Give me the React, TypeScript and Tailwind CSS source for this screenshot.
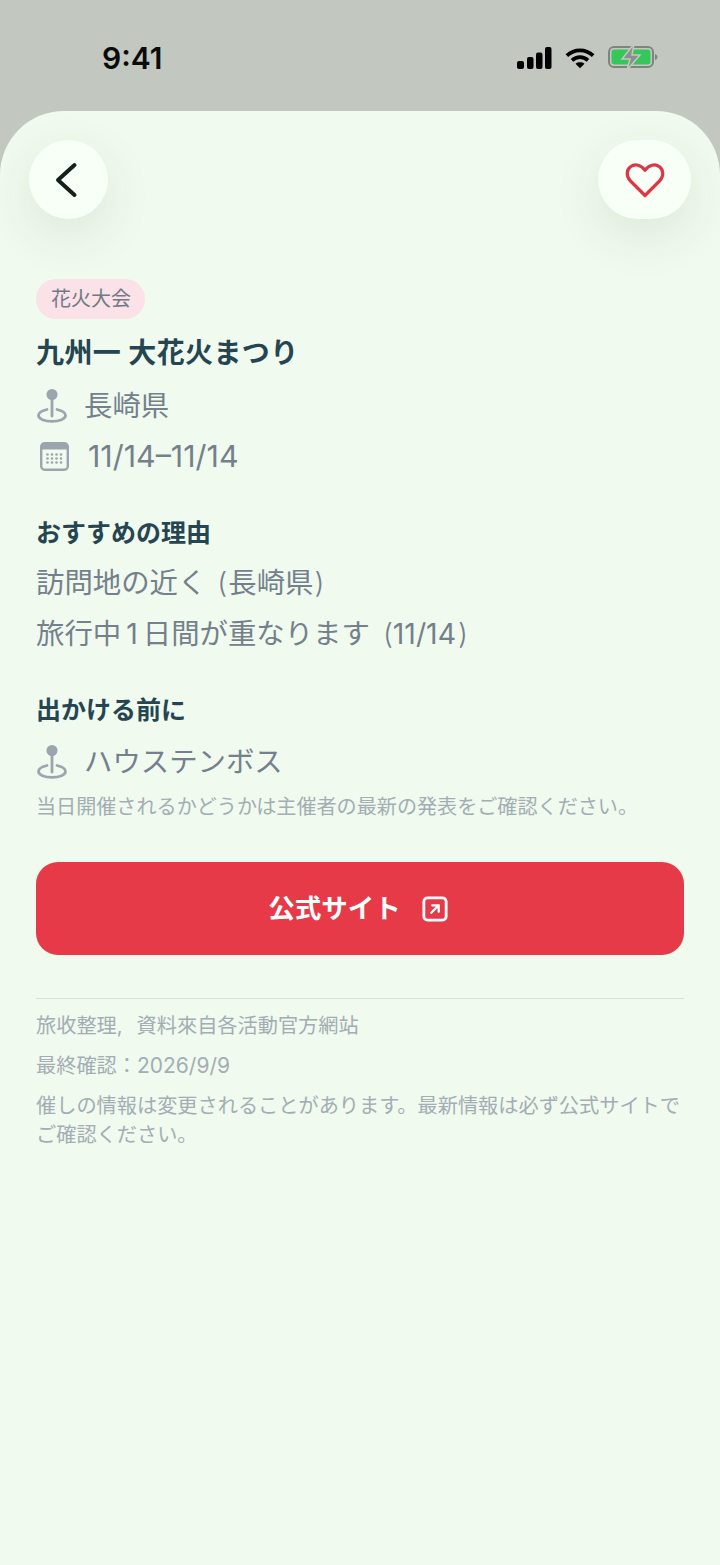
import React from 'react';

const cjk = 'font-["Inter","Noto_Sans_CJK_JP",sans-serif]';

const PinIcon: React.FC = () => (
  <svg width="32" height="36" viewBox="0 0 32 36" fill="none" className="shrink-0">
    <path d="M16 11v17" stroke="#9aa5af" strokeWidth="2.800" strokeLinecap="round" />
    <circle cx="16" cy="6.500" r="5.500" fill="#9aa5af" />
    <path d="M11 21.500C6 22.600 2.500 24.600 2.500 27.500c0 3.400 6 5.800 13.500 5.800s13.500-2.400 13.500-5.800c0-2.900-3.500-4.900-8.500-6" stroke="#9aa5af" strokeWidth="2.800" strokeLinecap="round" />
  </svg>
);

const CalendarIcon: React.FC = () => (
  <svg width="29" height="29" viewBox="0 0 29 29" fill="none" className="shrink-0">
    <rect x="1.200" y="1.200" width="26.600" height="26.600" rx="3.500" stroke="#9aa5af" strokeWidth="2.400" />
    <path d="M1 4.500A3.500 3.500 0 0 1 4.500 1h20A3.500 3.500 0 0 1 28 4.500V7.500H1z" fill="#9aa5af" />
    {[7.500, 12, 16.500, 21].map((x) => [12.500, 16.500, 20.500].map((y) => (
      <circle key={`${x}-${y}`} cx={x} cy={y} r="1.300" fill="#9aa5af" />
    )))}
  </svg>
);

const StatusBar: React.FC = () => (
  <div className="h-[111px] bg-[#c2c8bf] flex justify-between pl-[102px] pr-[62px] pt-[40px]">
    <span className="font-['Inter',sans-serif] font-semibold text-[30px] leading-[36px] text-[#0b0b0b]">9:41</span>
    <div className="flex items-start gap-[13px] pt-[7px]">
      <svg width="35" height="23" viewBox="0 0 35 23" fill="#000">
        <rect x="0" y="14" width="7" height="8" rx="2" />
        <rect x="10" y="10" width="6.500" height="12" rx="2" />
        <rect x="19" y="5.500" width="6.500" height="16.500" rx="2" />
        <rect x="28" y="0" width="6.500" height="22" rx="2" />
      </svg>
      <svg width="30" height="23" viewBox="0 0 32 23" fill="none" stroke="#000" strokeWidth="4">
        <path d="M2 8.500C10 1 22 1 30 8.500" />
        <path d="M7.500 13.500c5-4.500 12-4.500 17 0" />
        <path d="M16 22l-4.800-5c2.800-2 6.800-2 9.600 0z" fill="#000" stroke="none" />
      </svg>
      <svg width="50" height="26" viewBox="0 0 50 26" fill="none" className="-mt-[3px]">
        <rect x="1" y="3" width="44" height="20" rx="5" stroke="#7f8480" strokeWidth="2" />
        <rect x="3.500" y="5.500" width="39" height="15" rx="3" fill="#35c75a" />
        <path d="M47 10c1.600.5 2.500 1.600 2.500 3s-.9 2.500-2.500 3z" fill="#7f8480" />
        <path d="M26 0L14 15h8l-3 11 13-15h-8z" fill="#8b908c" stroke="#c2c8bf" strokeWidth="1.500" />
      </svg>
    </div>
  </div>
);

const InfoRow: React.FC<{ icon: React.ReactNode; children: React.ReactNode; gap?: string }> = ({ icon, children, gap = 'gap-[16px]' }) => (
  <div className={`flex items-center ${gap}`}>
    {icon}
    {children}
  </div>
);

const App: React.FC = () => {
  return (
    <div className={`relative w-[720px] h-[1565px] overflow-hidden bg-[#c2c8bf] ${cjk}`}>
      <StatusBar />
      <div className="relative h-[1454px] bg-[#f0faee] rounded-t-[64px] px-[36px] pt-[168px]">
        <button className="absolute left-[29px] top-[29px] w-[79px] h-[79px] rounded-full bg-[#f8fff6] shadow-[0_16px_50px_rgba(60,80,60,0.10)] flex items-center justify-center">
          <svg width="28" height="36" viewBox="0 0 28 36" fill="none" className="-ml-[4px]">
            <path d="M21.500 3L5 18l16.500 15" stroke="#15201a" strokeWidth="4" strokeLinecap="round" strokeLinejoin="round" />
          </svg>
        </button>
        <button className="absolute right-[29px] top-[29px] w-[93px] h-[79px] rounded-[40px] bg-[#f8fff6] shadow-[0_16px_50px_rgba(60,80,60,0.10)] flex items-center justify-center">
          <svg width="40" height="36" viewBox="0 0 40 36" fill="none">
            <path d="M20 33.500L5 18.500C1 14 1.500 8 5.500 4.800c4.500-3.400 10.500-2 14.500 3.500 4-5.500 10-6.900 14.500-3.500C38.500 8 39 14 35 18.500z" stroke="#dc3747" strokeWidth="3.200" strokeLinejoin="round" />
          </svg>
        </button>

        <span className="inline-flex items-center h-[40px] rounded-full bg-[#fbe1e8] pl-[15px] pr-[14px] text-[20px] text-[#6f7a84]">花火大会</span>
        <h1 className="mt-[13px] text-[28px] tracking-[0.400px] leading-[42px] font-bold text-[#264552]">九州一 大花火まつり</h1>
        <div className="mt-[14px] flex flex-col gap-[14px]">
          <InfoRow icon={<PinIcon />}>
            <span className="text-[28.400px] leading-[36px] text-[#74808c]">長崎県</span>
          </InfoRow>
          <div className="pl-[4px]">
            <InfoRow icon={<CalendarIcon />} gap="gap-[19px]">
              <span className="text-[30.400px] leading-[36px] text-[#74808c]">11/14–11/14</span>
            </InfoRow>
          </div>
        </div>

        <h2 className="mt-[41px] text-[25px] leading-[36px] font-bold text-[#264552]">おすすめの理由</h2>
        <p className="mt-[14px] text-[28.400px] leading-[36px] text-[#74808c]">訪問地の近く<span className="ml-[11px] mr-[1px] font-light">(</span>長崎県<span className="ml-[1px] font-light">)</span></p>
        <p className="mt-[15px] text-[28.400px] leading-[36px] text-[#74808c]">旅行中<span className="mx-[5px]">1</span>日間が重なります<span className="ml-[13px] font-light">(</span>11/14<span className="ml-[2px] font-light">)</span></p>

        <h2 className="mt-[40px] text-[25px] leading-[36px] font-bold text-[#264552]">出かける前に</h2>
        <div className="mt-[16px]">
          <InfoRow icon={<PinIcon />}>
            <span className="text-[28.400px] leading-[36px] text-[#74808c]">ハウステンボス</span>
          </InfoRow>
        </div>
        <p className="mt-[12px] text-[20.100px] leading-[30px] text-[#a3adb4]">当日開催されるかどうかは主催者の最新の発表をご確認ください。</p>

        <button className="mt-[40px] w-full h-[93px] rounded-[22px] bg-[#e73a48] flex items-center justify-center gap-[21px] pr-[4px] text-white text-[26.500px] font-bold">
          公式サイト
          <svg width="26" height="26" viewBox="0 0 28 28" fill="none" stroke="#fff" strokeWidth="3">
            <rect x="2" y="2" width="24" height="24" rx="4" />
            <path d="M10 18l8-8M11 10h7v7" strokeLinecap="round" strokeLinejoin="round" strokeWidth="2.500" />
          </svg>
        </button>

        <div className="mt-[43px] border-t border-[#d9e0d9] pt-[12px] text-[20.200px] text-[#a3adb4]">
          <p className="leading-[30px]">旅收整理,<span className="ml-[14px]">資料來自各活動官方網站</span></p>
          <p className="mt-[10px] leading-[30px]">最終確認：<span className="text-[21px]">2026/9/9</span></p>
          <p className="mt-[10px] leading-[29px]">催しの情報は変更されることがあります。最新情報は必ず公式サイトでご確認ください。</p>
        </div>
      </div>
    </div>
  );
};

export default App;
